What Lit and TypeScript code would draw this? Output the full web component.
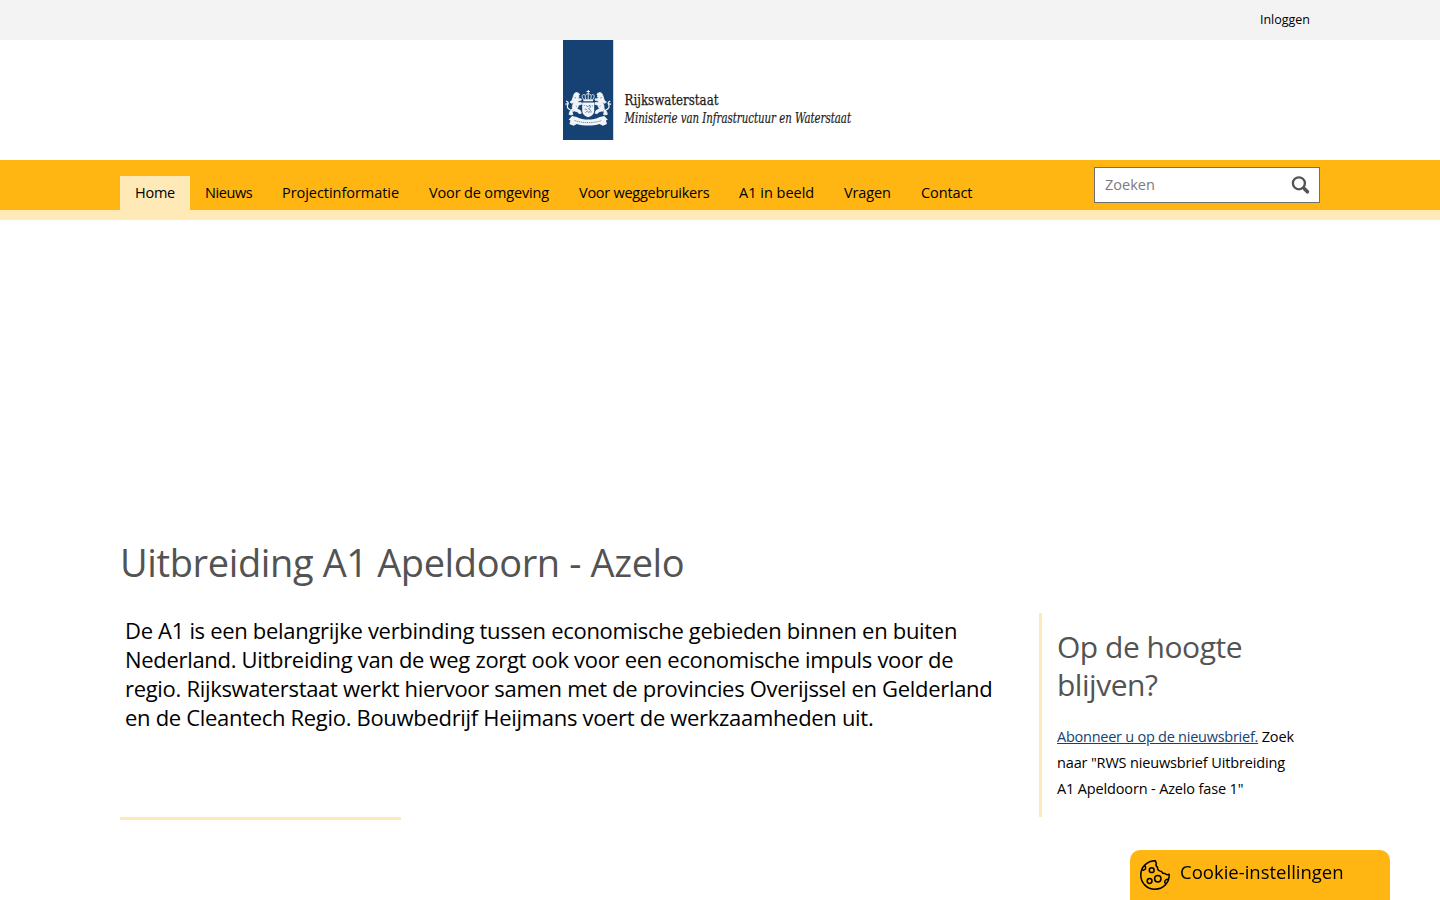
import { LitElement, html, svg, css } from "lit";

interface NavItem {
  label: string;
  width: number;
  spacing: number;
}

const NAV: NavItem[] = [
  { label: "Home", width: 70, spacing: -0.25 },
  { label: "Nieuws", width: 77, spacing: -0.4 },
  { label: "Projectinformatie", width: 147, spacing: -0.05 },
  { label: "Voor de omgeving", width: 150, spacing: -0.15 },
  { label: "Voor weggebruikers", width: 160, spacing: -0.26 },
  { label: "A1 in beeld", width: 105, spacing: 0 },
  { label: "Vragen", width: 77, spacing: -0.15 },
  { label: "Contact", width: 82, spacing: -0.1 },
];

const LEAD = [
  "De A1 is een belangrijke verbinding tussen economische gebieden binnen en buiten",
  "Nederland. Uitbreiding van de weg zorgt ook voor een economische impuls voor de",
  "regio. Rijkswaterstaat werkt hiervoor samen met de provincies Overijssel en Gelderland",
  "en de Cleantech Regio. Bouwbedrijf Heijmans voert de werkzaamheden uit.",
];

// One heraldic lion, facing the shield; mirrored for the right-hand side.
const lion = svg`
  <path class="body" d="M19.500 20.500c.4-2 1.700-3 3.200-3l2.200 1 .4 1.500-1.300.7 1.200 1.100-1.500 1c.8 1 1.700 1.300 3.300.9l.3 1.400c-1.200.8-2.300.8-3.500.4l.4 2.200 3-.1.300 1.700-3.200.9c-.1 1.700-.7 2.700-1.500 3.500l3.500 1.900.9 2.700-2.300.3-1.300-1.700-3.400-1-2.100 1.500.7 2.100-1.100.4-2.700-.4c.1-2.400 1.500-4.600 3.400-5.900-.6-2.500.4-4.200 1.500-6l-2.600.6-1.400-1.200 2-1.400z"/>
  <path d="M16.500 34.800c-3-.6-4-3-2.800-5.300.9-1.600.5-2.800-1.700-3.400M13.700 28.500l-2.400.8" class="tail"/>
  <path d="M20.500 22.500l1.500.6M21.700 30.800l1 .7M18.300 36l1.200.3" class="mark"/>`;

class SiteLogo extends LitElement {
  static styles = css`
    :host { display: block; width: 314px; height: 100px; }
    svg { display: block; overflow: visible; }
    .name, .ministry { font-family: "DejaVu Serif Condensed", "DejaVu Serif", serif; font-size: 14px; fill: #1c1c1c; stroke: #1c1c1c; stroke-width: 0.25; }
    .ministry { font-style: italic; stroke-width: 0.2; }
    .arms { fill: #f1f5f9; }
    .body { stroke: #f1f5f9; stroke-width: 0.8; stroke-linejoin: round; }
    .tail { fill: none; stroke: #f1f5f9; stroke-width: 1.3; }
    .mark { fill: none; stroke: #154273; stroke-width: 0.6; }
    .fine { fill: none; stroke: #f1f5f9; stroke-width: 0.9; }
  `;
  render() {
    return html`<svg width="314" height="100" viewBox="0 0 314 100" role="img" aria-label="Rijkswaterstaat">
      <rect width="50" height="100" fill="#154273" />
      <rect x="50" width="0.6" height="100" fill="#aebccc" />
      <g class="arms" transform="translate(-8.9 35)">
        <path d="M33.700 14.900h1v1.200h1.100v.9h-1.100v1.500h-1V17h-1.200v-.9h1.200z" />
        <g class="fine">
          <path d="M29.300 24.200c-2.600-3.400-.6-5.600 1.500-4.200M38.900 24.200c2.600-3.400.6-5.600-1.500-4.200M31.700 24c-1.400-3.200-.3-5.200 2.400-5.200s3.800 2 2.400 5.200M34.100 18.500v5.500" />
        </g>
        <path d="M28.900 24.200h10.400l-.5 2.100h-9.400z" />
        <path d="M28.100 27.400h12v8.300c0 3.200-2.200 5.200-6 6.500-3.800-1.300-6-3.300-6-6.500z" />
        <g class="mark">
          <path d="M31.800 30.500l1.900 1.200 2.100-1.600.6 2.100-2 1.600 2.100 1.600-1.600 2.200-1.700-1.600-1.900 1.600M30.500 34l2.300.5M37.800 36.500l-1.300 1M30.100 30v1M38.200 30.500v1" />
        </g>
        <g>${lion}</g>
        <g transform="translate(68.200 0) scale(-1 1)">${lion}</g>
        <path d="M14.500 44.800l3.500-3.700 4.500.8c3.800 1.900 7.400 2.700 11.600 2.700s7.800-.8 11.600-2.700l4.500-.8 3.500 3.700-1.900.8 1.100 3.400-4.200 1.800-3.200-1.800c-3.400 1.100-7.400 1.600-11.400 1.600s-8-.5-11.400-1.600l-3.200 1.800-4.200-1.800 1.100-3.400z" />
        <path class="mark" d="M20.500 45.500c4.500 1.500 8.800 2.100 13.600 2.100s9.100-.6 13.600-2.100" stroke-dasharray="1.300 .8" />
      </g>
      <text class="name" x="61.500" y="65" textLength="94" lengthAdjust="spacingAndGlyphs">Rijkswaterstaat</text>
      <text class="ministry" x="61.500" y="82.500" textLength="226.500" lengthAdjust="spacingAndGlyphs">Ministerie van Infrastructuur en Waterstaat</text>
    </svg>`;
  }
}
customElements.define("site-logo", SiteLogo);

class AppRoot extends LitElement {
  static styles = css`
    :host { display: block; height: 900px; overflow: hidden; background: #fff; color: #000; font-family: "Open Sans", "Noto Sans", sans-serif; }
    * { box-sizing: border-box; }
    h1, h2, p, ul { margin: 0; padding: 0; font-weight: 400; }
    a { color: inherit; text-decoration: none; }
    .top { height: 40px; background: #f3f3f3; display: flex; justify-content: flex-end; padding-right: 130px; }
    .login { font-size: 12.5px; line-height: 39px; }
    .brand { height: 120px; padding-left: 563px; }
    .bar { height: 60px; padding: 0 120px; display: flex; justify-content: space-between; background: #ffb612; border-bottom: 10px solid #ffe9b7; }
    .nav { display: flex; align-self: flex-end; list-style: none; }
    .nav li { height: 34px; padding-left: 15px; line-height: 33px; font-size: 14.5px; white-space: nowrap; }
    .nav .current { background: #ffe9b7; }
    .search { width: 226px; height: 36px; margin-top: 7px; padding: 0 9px 0 10px; border: 1px solid #6f6f6f; background: #fff; display: flex; align-items: center; justify-content: space-between; color: #7c7c7c; font-size: 14.5px; }
    .search span { padding-bottom: 2px; }
    .search svg { display: block; }
    .page { padding: 318px 120px 0; }
    h1 { color: #535353; font-size: 38px; line-height: 48px; letter-spacing: -0.38px; }
    .columns { display: flex; justify-content: space-between; margin-top: 27px; }
    .lead { padding: 3px 0 0 5px; font-size: 22px; line-height: 29px; letter-spacing: -0.31px; white-space: nowrap; }
    .aside { width: 281px; height: 204px; border-left: 3px solid #ffe9b7; padding: 15px 0 0 15px; }
    h2 { color: #535353; font-size: 30px; line-height: 38px; letter-spacing: -0.48px; }
    .news { margin-top: 20px; font-size: 14.5px; line-height: 26px; letter-spacing: -0.15px; white-space: nowrap; }
    .news a { color: #154273; text-decoration: underline; letter-spacing: -0.25px; }
    .rule { width: 281px; height: 3px; background: #ffe9b7; }
    .cookie { position: fixed; right: 50px; bottom: 0; width: 260px; height: 50px; padding: 0 0 0 10px; display: flex; background: #ffb612; border-radius: 10px 10px 0 0; font-size: 18.5px; line-height: 43px; }
    .cookie svg { margin: 10px 10px 0 0; }
  `;
  render() {
    return html`
      <div class="top"><a class="login" href="#">Inloggen</a></div>
      <header class="brand"><site-logo></site-logo></header>
      <div class="bar">
        <ul class="nav">
          ${NAV.map((item, i) => html`<li class=${i === 0 ? "current" : ""} style="width:${item.width}px;letter-spacing:${item.spacing}px"><a href="#">${item.label}</a></li>`)}
        </ul>
        <div class="search">
          <span>Zoeken</span>
          <svg width="19" height="19" viewBox="0 0 19 19" fill="none" stroke="#535353">
            <circle cx="7.900" cy="7.300" r="6" stroke-width="2.300" />
            <path d="M12 11.400l1.500 1.500" stroke-width="2.300" />
            <path d="M13.400 12.800l3 3" stroke-width="3.600" stroke-linecap="round" />
          </svg>
        </div>
      </div>
      <main class="page">
        <h1>Uitbreiding A1 Apeldoorn - Azelo</h1>
        <div class="columns">
          <p class="lead">${LEAD.map((line, i) => html`${i ? html`<br />` : ""}${line}`)}</p>
          <aside class="aside">
            <h2>Op de hoogte<br />blijven?</h2>
            <p class="news"><a href="#">Abonneer u op de nieuwsbrief.</a> Zoek<br />naar "RWS nieuwsbrief Uitbreiding<br />A1 Apeldoorn - Azelo fase 1"</p>
          </aside>
        </div>
        <div class="rule"></div>
      </main>
      <div class="cookie">
        <svg width="30" height="30" viewBox="0 0 30 30" fill="none" stroke="#000" stroke-width="1.500" stroke-linejoin="round">
          <path d="M15.500.8C7 .8.800 7 .800 15S7 29.200 15 29.200 29.200 23 29.200 15.300l-.1-1c-1.600.7-3.100.4-4.100-.8-1.600.2-2.900-.5-3.500-2.100-2.500-.2-4.100-1.700-4-4C15.800 6 15.600 4.600 16.400 3.300 15.800 2.500 15.600 1.700 15.500.8z" />
          <circle cx="11.700" cy="10.200" r="2.400" />
          <circle cx="17.800" cy="18.800" r="3.200" />
          <circle cx="9.600" cy="21" r="2.400" />
          <path d="M4.200 5.800c2 .7 2 3.800-.3 4.300-.7.200-1.400 0-2-.4M28.400 19.300c-2.200-.2-4 1.100-3.600 3 .1.700.6 1.200 1.300 1.500" />
        </svg>
        <span>Cookie-instellingen</span>
      </div>
    `;
  }
}
customElements.define("app-root", AppRoot);
